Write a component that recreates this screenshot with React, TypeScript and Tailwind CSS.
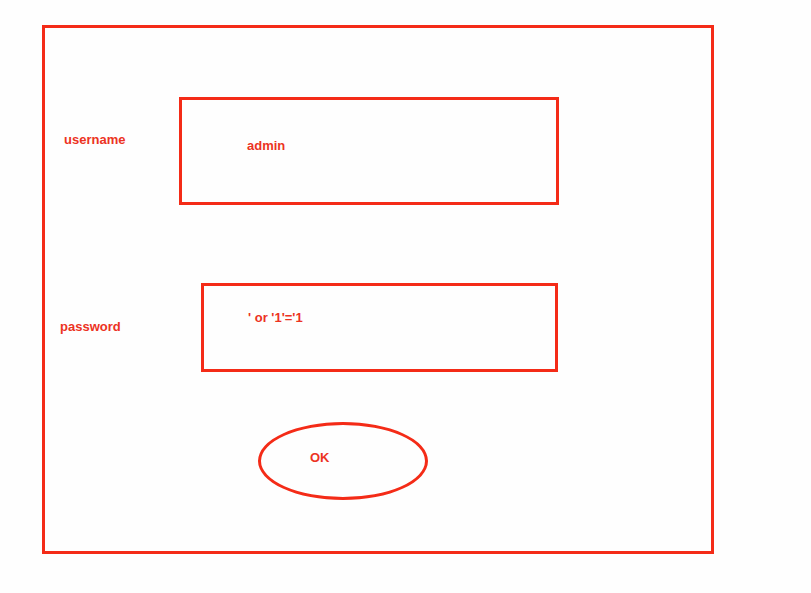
const RED = "border-[#f42b17]";

export default function App() {
  return (
    <div className="w-[811px] h-[593px] bg-[#fefefe] overflow-hidden font-['Liberation_Sans',Arial,sans-serif] font-bold text-[13px] leading-[15px] text-[#ec3323]">
      <div className={`ml-[42px] mt-[25px] w-[672px] h-[529px] border-[3px] ${RED}`}>
        {/* username row */}
        <div className="flex items-start mt-[69px]">
          <span className="ml-[19px] mt-[35px] w-[115px]">username</span>
          <div className={`w-[380px] h-[108px] border-[3px] ${RED} pl-[65px] pt-[38px]`}>admin</div>
        </div>

        {/* password row */}
        <div className="flex items-start mt-[78px]">
          <span className="ml-[15px] mt-[36px] w-[141px]">password</span>
          <div className={`w-[357px] h-[89px] border-[3px] ${RED} pl-[44px] pt-[24px]`}>' or '1'='1</div>
        </div>

        {/* OK button */}
        <div className={`ml-[213px] mt-[50px] w-[170px] h-[78px] rounded-[50%] border-[3px] ${RED} pl-[49px] pt-[25px]`}>
          OK
        </div>
      </div>
    </div>
  );
}
